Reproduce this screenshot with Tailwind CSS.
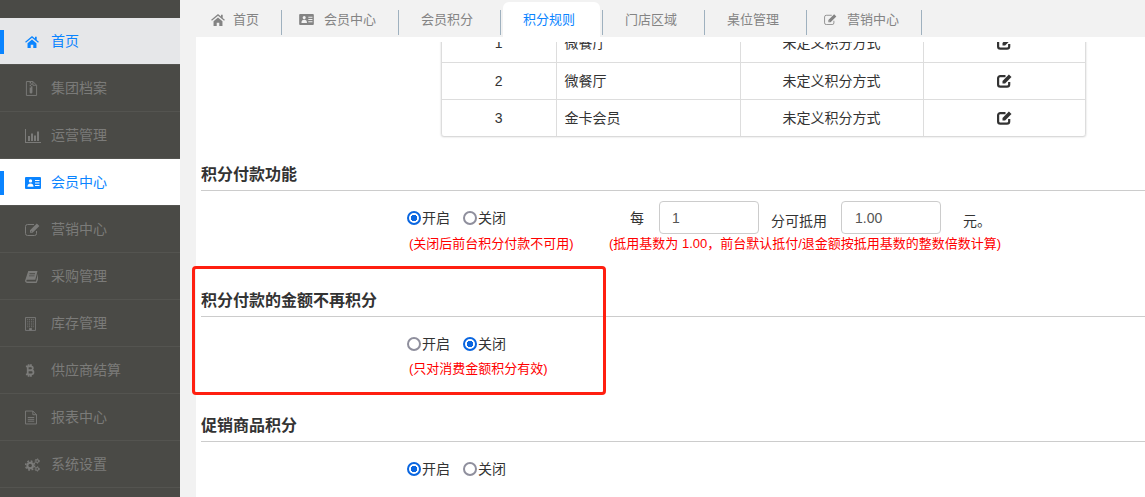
<!DOCTYPE html>
<html lang="zh-CN">
<head>
  <meta charset="UTF-8">
  <title>积分规则</title>
  <script src="https://cdn.jsdelivr.net/npm/@tailwindcss/browser@4"></script>
</head>
<body class="h-[497px] overflow-hidden bg-[#f2f2f2] text-[14px] text-[#333] font-['Liberation_Sans','Noto_Sans_CJK_SC',sans-serif]">

  <svg class="hidden">
    <symbol id="i-home" viewBox="0 0 16 14"><path fill="currentColor" d="M8 0 0 6.8l.9 1.1L8 2l7.100 5.900.9-1.100L13.500 4.700V1h-2v2L8 0zM2.800 8.500 8 4.100l5.200 4.400V14H9.500v-3.800h-3V14H2.800z"/></symbol>
    <symbol id="i-zip" viewBox="0 0 14 16"><path fill="none" stroke="currentColor" d="M1.500.5h7l4 4v11h-11zM8.500.5v4h4"/><path fill="currentColor" d="M5 1h1.500v1.500H5zM6.500 2.500H8V4H6.500zM5 4h1.500v1.500H5zM6.500 5.500H8V7H6.500zM5 7h3v5a1.500 1.500 0 0 1-3 0z"/></symbol>
    <symbol id="i-chart" viewBox="0 0 16 14"><path fill="currentColor" d="M0 0h1v13h15v1H0zM3 7h2v5H3zM6 4.500h2V12H6zM9 6.500h2V12H9zM12 2.500h2V12h-2z"/></symbol>
    <symbol id="i-card" viewBox="0 0 16 12"><path fill="currentColor" fill-rule="evenodd" d="M1 0h14a1 1 0 0 1 1 1v10a1 1 0 0 1-1 1H1a1 1 0 0 1-1-1V1a1 1 0 0 1 1-1zm4.500 2.200a1.700 1.700 0 1 0 0 3.400 1.700 1.700 0 0 0 0-3.400zM2.500 9.800h6c0-2-.8-3.400-3-3.400s-3 1.400-3 3.400zM10 3v1h4.500V3zm0 2.500v1h4.500v-1zM10 8v1h4.500V8z"/></symbol>
    <symbol id="i-edit" viewBox="0 0 15 13"><path fill="none" stroke="currentColor" d="M11.500 8v2.500a2 2 0 0 1-2 2h-7a2 2 0 0 1-2-2v-7a2 2 0 0 1 2-2H9"/><path fill="currentColor" d="M5 7.200 11.800.4l2.600 2.600-6.800 6.800H5zM6 8.700h1L6 7.700z"/></symbol>
    <symbol id="i-edit-bold" viewBox="0 0 15 14"><path fill="none" stroke="currentColor" stroke-width="2.200" d="M12.200 8v2.500a2.200 2.200 0 0 1-2.200 2.200H3.300a2.200 2.200 0 0 1-2.200-2.200V4.300a2.200 2.200 0 0 1 2.200-2.200h5.200"/><path fill="currentColor" d="M5.500 6.900 11.900.5l2.600 2.600-6.400 6.400H5.500z"/></symbol>
    <symbol id="i-book" viewBox="0 0 14 13"><path fill="currentColor" fill-rule="evenodd" d="M3.500 0H13.500l-2.400 9.500H2.600C1.800 9.500 1.500 10 1.500 10.500s.4 1 1.100 1H11.800L14 3v6.500L12.500 13H2.500C1 13 0 11.800 0 10.500z M4.800 2.500v1h6v-1zM4.300 4.800v1h6v-1z"/></symbol>
    <symbol id="i-building" viewBox="0 0 12 15"><path fill="none" stroke="currentColor" d="M.5.500h11v14H.5z"/><path fill="none" stroke="currentColor" stroke-dasharray="1 1" d="M2.500 2.500h7M2.500 4.500h7M2.500 6.500h7M2.500 8.500h7M2.500 10.500h7"/><path fill="currentColor" d="M4.500 12h3v2.500h-3z"/></symbol>
    <symbol id="i-btc" viewBox="0 0 11 14"><path fill="none" stroke="currentColor" stroke-width="2" d="M1 2.500h5.500a2 2 0 0 1 0 4.200H3m0 0h4a2.200 2.200 0 0 1 0 4.600H1M3 2.500v8.800M4 0v2.500M6.500 0v2.500M4 11.300V14M6.500 11.300V14"/></symbol>
    <symbol id="i-doc" viewBox="0 0 13 15"><path fill="none" stroke="currentColor" d="M.5.500h8l4 4v10H.5zM8.500.5v4h4M3 7.500h7M3 9.500h7M3 11.500h7"/></symbol>
    <symbol id="i-cogs" viewBox="0 0 16 14"><g fill="none" stroke="currentColor"><circle cx="5.500" cy="7.500" r="3" stroke-width="2.200"/><circle cx="5.500" cy="7.500" r="4.800" stroke-width="1.600" stroke-dasharray="2 1.770"/><circle cx="13" cy="2.800" r="1.500" stroke-width="1.200"/><circle cx="13" cy="2.800" r="2.400" stroke-width="1" stroke-dasharray="1.200 1.310"/><circle cx="13" cy="11.200" r="1.500" stroke-width="1.200"/><circle cx="13" cy="11.200" r="2.400" stroke-width="1" stroke-dasharray="1.200 1.310"/></g></symbol>
  </svg>

  <div class="flex h-[497px]">
    <!-- sidebar -->
    <aside class="w-[180px] shrink-0 h-full bg-[#4a4a46] pt-[18px] text-[#7b7b79]">
      <a class="relative flex items-center h-[47px] pt-px border-b border-[#545450] bg-[#e6e7e9] text-[#0a84ff]">
        <span class="absolute left-0 top-[12px] w-[4px] h-[24px] bg-[#0a84ff]"></span>
        <span class="flex w-[51px] pl-[25px]"><svg class="w-[14px] h-[12px]"><use href="#i-home"/></svg></span>首页
      </a>
      <a class="flex items-center h-[47px] pt-px border-b border-[#545450]">
        <span class="flex w-[51px] pl-[25px]"><svg class="w-[13px] h-[15px]"><use href="#i-zip"/></svg></span>集团档案
      </a>
      <a class="flex items-center h-[47px] pt-px border-b border-[#545450]">
        <span class="flex w-[51px] pl-[25px]"><svg class="w-[16px] h-[14px]"><use href="#i-chart"/></svg></span>运营管理
      </a>
      <a class="relative flex items-center h-[47px] pt-px border-b border-[#545450] bg-white text-[#0a84ff]">
        <span class="absolute left-0 top-[12px] w-[4px] h-[24px] bg-[#0a84ff]"></span>
        <span class="flex w-[51px] pl-[25px]"><svg class="w-[16px] h-[12px]"><use href="#i-card"/></svg></span>会员中心
      </a>
      <a class="flex items-center h-[47px] pt-px border-b border-[#545450]">
        <span class="flex w-[51px] pl-[25px]"><svg class="w-[15px] h-[13px]"><use href="#i-edit"/></svg></span>营销中心
      </a>
      <a class="flex items-center h-[47px] pt-px border-b border-[#545450]">
        <span class="flex w-[51px] pl-[25px]"><svg class="w-[13px] h-[12px]"><use href="#i-book"/></svg></span>采购管理
      </a>
      <a class="flex items-center h-[47px] pt-px border-b border-[#545450]">
        <span class="flex w-[51px] pl-[25px]"><svg class="w-[11px] h-[14px]"><use href="#i-building"/></svg></span>库存管理
      </a>
      <a class="flex items-center h-[47px] pt-px border-b border-[#545450]">
        <span class="flex w-[51px] pl-[25px]"><svg class="w-[10px] h-[13px]"><use href="#i-btc"/></svg></span>供应商结算
      </a>
      <a class="flex items-center h-[47px] pt-px border-b border-[#545450]">
        <span class="flex w-[51px] pl-[25px]"><svg class="w-[12px] h-[15px]"><use href="#i-doc"/></svg></span>报表中心
      </a>
      <a class="flex items-center h-[47px] pt-px border-b border-[#545450]">
        <span class="flex w-[51px] pl-[25px]"><svg class="w-[15px] h-[14px]"><use href="#i-cogs"/></svg></span>系统设置
      </a>
    </aside>

    <main class="relative flex-1 min-w-0 flex flex-col">
      <!-- tabs -->
      <nav class="flex h-[37px] shrink-0 pl-[16px] items-end text-[13px] text-[#848484]">
        <a class="flex items-center w-[86px] h-[25px] mb-[2px] pb-[6px] pl-[15px] border-r border-[#9fb1bf]"><svg class="w-[14px] h-[12px] mr-[8px]"><use href="#i-home"/></svg>首页</a>
        <a class="flex items-center w-[117px] h-[25px] mb-[2px] pb-[6px] pl-[17px] border-r border-[#9fb1bf]"><svg class="w-[15px] h-[11px] mr-[10px]"><use href="#i-card"/></svg>会员中心</a>
        <a class="flex items-center w-[102px] h-[25px] mb-[2px] pb-[6px] pl-[22px] border-r border-[#9fb1bf]">会员积分</a>
        <a class="flex items-center w-[97px] h-[35px] ml-[2px] pl-[20px] bg-white rounded-t-[6px] text-[#0a84ff]">积分规则</a>
        <a class="flex items-center w-[103px] h-[25px] mb-[2px] pb-[6px] ml-[2px] pl-[22px] border-x border-[#9fb1bf]">门店区域</a>
        <a class="flex items-center w-[102px] h-[25px] mb-[2px] pb-[6px] pl-[22px] border-r border-[#9fb1bf]">桌位管理</a>
        <a class="flex items-center w-[115px] h-[25px] mb-[2px] pb-[6px] pl-[17px] border-r border-[#9fb1bf]"><svg class="w-[13px] h-[11px] mr-[10px]"><use href="#i-edit"/></svg>营销中心</a>
      </nav>

      <div class="ml-[16px] flex-1 min-h-0 bg-white pt-[5px]">
        <div class="h-full overflow-hidden pl-[5px]">
          <!-- table is scrolled part-way out of view -->
          <div class="ml-[240px] -mt-[17px] w-[645px] rounded-b-[3px] border-x border-[#ddd] shadow-[0_1px_2px_rgba(0,0,0,0.2)]">
            <table class="w-full table-fixed border-collapse">
              <colgroup><col class="w-[114px]"><col class="w-[184px]"><col class="w-[183px]"><col></colgroup>
              <tbody>
                <tr class="h-[37px] border-b border-[#ddd]">
                  <td class="pt-px text-center border-r border-[#ddd]">1</td>
                  <td class="pt-px pl-[8px] border-r border-[#ddd]">微餐厅</td>
                  <td class="pt-px text-center border-r border-[#ddd]">未定义积分方式</td>
                  <td><svg class="block mx-auto w-[15px] h-[14px]"><use href="#i-edit-bold"/></svg></td>
                </tr>
                <tr class="h-[37px] border-b border-[#ddd]">
                  <td class="pt-px text-center border-r border-[#ddd]">2</td>
                  <td class="pt-px pl-[8px] border-r border-[#ddd]">微餐厅</td>
                  <td class="pt-px text-center border-r border-[#ddd]">未定义积分方式</td>
                  <td><svg class="block mx-auto w-[15px] h-[14px]"><use href="#i-edit-bold"/></svg></td>
                </tr>
                <tr class="h-[37px]">
                  <td class="pt-px text-center border-r border-[#ddd]">3</td>
                  <td class="pt-px pl-[8px] border-r border-[#ddd]">金卡会员</td>
                  <td class="pt-px text-center border-r border-[#ddd]">未定义积分方式</td>
                  <td><svg class="block mx-auto w-[15px] h-[14px]"><use href="#i-edit-bold"/></svg></td>
                </tr>
              </tbody>
            </table>
          </div>

          <section class="mt-[22px] h-[126px]">
            <h3 class="flex items-center h-[33px] pt-px border-b border-[#ccc] text-[16px] font-bold">积分付款功能</h3>
            <div class="flex pl-[206px] pt-[10px]">
              <div class="w-[202px] pt-[7px]">
                <div class="flex items-center h-[20px]">
                  <label class="flex items-center mr-[13px]"><input type="radio" name="a" checked class="appearance-none w-[14px] h-[14px] rounded-full border-2 border-[#8f8f9d] bg-white checked:border-[#0a66e0] checked:bg-[radial-gradient(circle,#0a66e0_0_3px,#fff_3.5px)] mr-px">开启</label>
                  <label class="flex items-center"><input type="radio" name="a" class="appearance-none w-[14px] h-[14px] rounded-full border-2 border-[#8f8f9d] bg-white checked:border-[#0a66e0] checked:bg-[radial-gradient(circle,#0a66e0_0_3px,#fff_3.5px)] mr-px">关闭</label>
                </div>
                <p class="mt-[7px] pl-[2px] h-[18px] leading-[18px] text-[13px] text-[#f00]">(关闭后前台积分付款不可用)</p>
              </div>
              <div>
                <div class="flex items-start pl-[21px]">
                  <span class="mt-[7px] mr-[15px]">每</span>
                  <input type="text" value="1" class="w-[100px] h-[33px] px-[12px] border border-[#ccc] rounded-[4px] text-[#555]">
                  <span class="mt-[10px] ml-[12px] mr-[14px]">分可抵用</span>
                  <input type="text" value="1.00" class="w-[100px] h-[33px] px-[13px] border border-[#ccc] rounded-[4px] text-[#555]">
                  <span class="mt-[10px] ml-[22px]">元。</span>
                </div>
                <p class="mt-px h-[18px] leading-[18px] text-[13px] text-[#f00] whitespace-nowrap">(抵用基数为 1.00，前台默认抵付/退金额按抵用基数的整数倍数计算)</p>
              </div>
            </div>
          </section>

          <section class="h-[125px]">
            <h3 class="flex items-center h-[33px] pt-px border-b border-[#ccc] text-[16px] font-bold">积分付款的金额不再积分</h3>
            <div class="pl-[206px] pt-[17px]">
              <div class="flex items-center h-[20px]">
                <label class="flex items-center mr-[13px]"><input type="radio" name="b" class="appearance-none w-[14px] h-[14px] rounded-full border-2 border-[#8f8f9d] bg-white checked:border-[#0a66e0] checked:bg-[radial-gradient(circle,#0a66e0_0_3px,#fff_3.5px)] mr-px">开启</label>
                <label class="flex items-center"><input type="radio" name="b" checked class="appearance-none w-[14px] h-[14px] rounded-full border-2 border-[#8f8f9d] bg-white checked:border-[#0a66e0] checked:bg-[radial-gradient(circle,#0a66e0_0_3px,#fff_3.5px)] mr-px">关闭</label>
              </div>
              <p class="mt-[6px] pl-[2px] h-[18px] leading-[18px] text-[13px] text-[#f00]">(只对消费金额积分有效)</p>
            </div>
          </section>

          <section>
            <h3 class="flex items-center h-[33px] pt-[2px] border-b border-[#ccc] text-[16px] font-bold">促销商品积分</h3>
            <div class="pl-[206px] pt-[17px]">
              <div class="flex items-center h-[20px]">
                <label class="flex items-center mr-[13px]"><input type="radio" name="c" checked class="appearance-none w-[14px] h-[14px] rounded-full border-2 border-[#8f8f9d] bg-white checked:border-[#0a66e0] checked:bg-[radial-gradient(circle,#0a66e0_0_3px,#fff_3.5px)] mr-px">开启</label>
                <label class="flex items-center"><input type="radio" name="c" class="appearance-none w-[14px] h-[14px] rounded-full border-2 border-[#8f8f9d] bg-white checked:border-[#0a66e0] checked:bg-[radial-gradient(circle,#0a66e0_0_3px,#fff_3.5px)] mr-px">关闭</label>
              </div>
            </div>
          </section>
        </div>
      </div>

      <!-- red annotation box drawn over the page -->
      <div class="absolute left-[12px] top-[266px] w-[414px] h-[129px] border-[3px] border-[#ff1f10] rounded-[4px] pointer-events-none"></div>
    </main>
  </div>
</body>
</html>
